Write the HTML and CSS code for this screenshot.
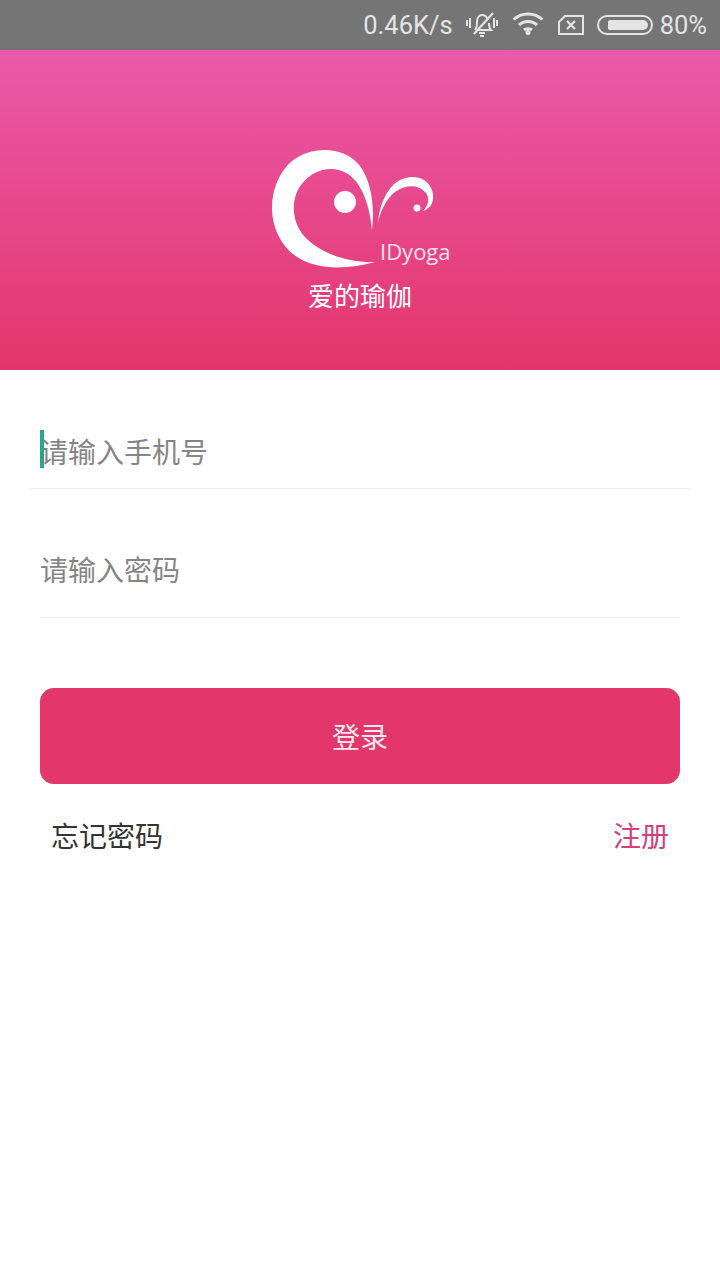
FILE: index.html
```html
<!DOCTYPE html>
<html lang="zh-CN">
<head>
    <meta charset="UTF-8">
    <meta name="viewport" content="width=device-width, initial-scale=1.0">
    <title>爱的瑜伽</title>
    <link rel="stylesheet" href="styles.css">
</head>
<body>
    <div class="status-bar">
        <span class="speed">0.46K/s</span>
        <svg class="icon-mute" width="32" height="28" viewBox="0 0 32 28" fill="none" stroke="#e4e4e4" stroke-width="2">
            <path d="M9 19c2-2 2-4 2-8 0-4 2-7 5-7s5 2 6 5"/>
            <path d="M23 12c0 3 0 5 2 7H11"/>
            <path d="M4 3l0 0M27 2L8 23" stroke-width="2.2"/>
            <path d="M13 22h6M14 25h4"/>
            <path d="M1 9v6M4 7v10M28 7v10M31 9v6" stroke-width="2"/>
        </svg>
        <svg class="icon-wifi" width="32" height="24" viewBox="0 0 32 24" fill="none" stroke="#e4e4e4" stroke-width="3">
            <path d="M1.5 8.5C9.5 1 22.500 1 30.500 8.500"/>
            <path d="M7 14c5-4.700 13-4.700 18 0"/>
            <path d="M12 19c2.300-1.800 5.700-1.800 8 0"/>
            <circle cx="16" cy="21.500" r="2.500" fill="#e4e4e4" stroke="none"/>
        </svg>
        <svg class="icon-sim" width="26" height="22" viewBox="0 0 26 22" fill="none" stroke="#e4e4e4" stroke-width="2">
            <path d="M7 2h18v18H1V8z"/>
            <path d="M9 7l8 8M17 7l-8 8" stroke-width="2.200"/>
        </svg>
        <div class="battery"><div class="battery-fill"></div></div>
        <span class="percent">80%</span>
    </div>

    <div class="hero">
        <svg class="logo" width="180" height="124" viewBox="0 0 180 124">
            <!-- origin is 270,148 on the page -->
            <path fill="#fff" d="M105 114C70 124 30 122 12 94C-6 66 2 30 22 13C42-3 75-2 90 18C101 33 105 58 102 82C100 60 93 36 78 26C62 16 42 22 31 37C20 52 22 74 34 88C50 106 80 115 105 114Z"/>
            <circle fill="#fff" cx="75" cy="54" r="11"/>
            <path fill="#fff" d="M108 74C110 55 118 38 130 32C143 26 157 29 162 42C165 52 162 60 153 63C159 57 160 49 155 44C147 36 135 37 125 44C117 50 111 62 108 74Z"/>
            <circle fill="#fff" cx="147" cy="60" r="3.500"/>
            <text class="logo-text" x="110" y="112">IDyoga</text>
        </svg>
        <div class="brand">爱的瑜伽</div>
    </div>

    <form class="login">
        <div class="field field-wide">
            <span class="caret"></span>
            <span class="placeholder">请输入手机号</span>
        </div>
        <div class="field">
            <span class="placeholder">请输入密码</span>
        </div>
        <button class="submit" type="button">登录</button>
        <div class="links">
            <a class="forgot">忘记密码</a>
            <a class="register">注册</a>
        </div>
    </form>
</body>
</html>
```

FILE: styles.css
```css
* {
    box-sizing: border-box;
}

body {
    margin: 0;
    height: 1280px;
    background: #fff;
    font-family: "Noto Sans CJK SC", "Noto Sans", sans-serif;
    font-size: 28px;
    overflow: hidden;
}

.status-bar {
    height: 50px;
    background: #757575;
    color: #e4e4e4;
    display: flex;
    align-items: center;
    justify-content: flex-end;
    padding-right: 13px;
    font-family: Roboto, sans-serif;
    font-size: 25.500px;
}

.speed {
    margin-right: 13px;
}

.icon-mute {
    margin-right: 14px;
}

.icon-wifi {
    margin-right: 14px;
    margin-top: -4px;
}

.icon-sim {
    margin-right: 13px;
}

.battery {
    width: 56px;
    height: 20px;
    border: 2px solid #e4e4e4;
    border-radius: 10px;
    padding: 3px;
    margin-right: 7px;
    display: flex;
    justify-content: flex-end;
}

.battery-fill {
    width: 40px;
    background: #e4e4e4;
    border-radius: 2px 6px 6px 2px;
}

.hero {
    height: 320px;
    background: linear-gradient(#eb59aa, #e3366b);
    display: flex;
    flex-direction: column;
    align-items: center;
    padding-top: 98px;
}

.logo {
    margin-left: 0;
}

.logo-text {
    fill: #fbe3ee;
    font-family: "Open Sans", sans-serif;
    font-size: 22px;
}

.brand {
    color: #fff;
    font-size: 26px;
    line-height: 36px;
    margin-top: 5px;
}

.login {
    display: flex;
    flex-direction: column;
    padding: 0 40px;
}

.field {
    position: relative;
    height: 129px;
    padding-top: 59px;
    border-bottom: 1px solid #eeeeee;
    line-height: 42px;
}

.field-wide {
    height: 119px;
    padding-top: 60px;
    margin: 0 -10px;
    padding-left: 10px;
}

.placeholder {
    color: #858585;
}

.caret {
    position: absolute;
    left: 10px;
    top: 60px;
    width: 4px;
    height: 38px;
    background: #2aa590;
}

.submit {
    height: 96px;
    margin-top: 70px;
    border: 0;
    border-radius: 14px;
    background: #e3376c;
    color: #fbe9ef;
    font: inherit;
}

.links {
    display: flex;
    justify-content: space-between;
    padding: 30px 11px 0 11px;
    line-height: 42px;
}

.forgot {
    color: #333;
}

.register {
    color: #d4407b;
}
```
